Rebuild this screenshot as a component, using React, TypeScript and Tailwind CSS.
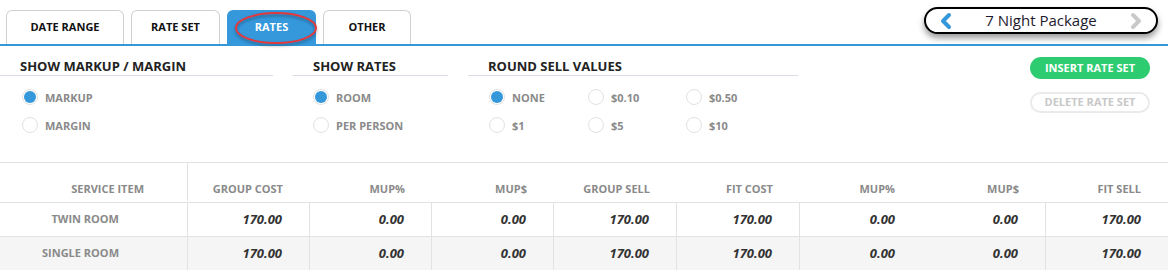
import React from "react";

const font = { fontFamily: '"Open Sans", "Noto Sans", sans-serif' };

function Radio({ checked, label }: { checked?: boolean; label: string }) {
  return (
    <div className="flex items-center h-4">
      <span className="w-4 h-4 rounded-full border border-[#e2e2e2] bg-white flex items-center justify-center shrink-0">
        {checked && <span className="w-[12px] h-[12px] rounded-full bg-[#3498db]" />}
      </span>
      <span className="ml-[7px] text-[11px] font-bold text-[#8a8a8a] leading-none">{label}</span>
    </div>
  );
}

function Tab({ label, active, w }: { label: string; active?: boolean; w: string }) {
  return (
    <div
      className={
        "h-[34px] flex items-center justify-center rounded-t-[6px] text-[11px] font-bold " +
        w +
        (active
          ? " bg-[#3498db] text-white"
          : " bg-white text-[#111] border border-b-0 border-[#d0d0d0]")
      }
    >
      {label}
    </div>
  );
}

const cols = "grid grid-cols-[188px_122px_122px_122px_123px_123px_122px_124px_122px]";

const headers = ["GROUP COST", "MUP%", "MUP$", "GROUP SELL", "FIT COST", "MUP%", "MUP$", "FIT SELL"];

function Row({ name, bg }: { name: string; bg: string }) {
  const vals = ["170.00", "0.00", "0.00", "170.00", "170.00", "0.00", "0.00", "170.00"];
  return (
    <div className={cols + " h-[34px] border-b border-[#e2e2e2] " + bg}>
      <div className="border-r border-[#e2e2e2] flex items-center justify-end pr-[68px] text-[11px] font-bold text-[#8a8a8a]">
        {name}
      </div>
      {vals.map((v, i) => (
        <div
          key={i}
          className={
            "flex items-center justify-end pr-[27px] text-[13px] font-bold italic text-[#333] " +
            (i < 7 && i !== 5 ? "border-r border-[#e2e2e2]" : "")
          }
        >
          {v}
        </div>
      ))}
    </div>
  );
}

export default function App() {
  return (
    <div className="w-[1168px] h-[270px] bg-white overflow-hidden relative" style={font}>
      {/* top bar */}
      <div className="flex justify-between items-start border-b-2 border-[#3498db] h-[46px] pl-[6px] pr-[10px]">
        <div className="flex gap-[7px] pt-[10px]">
          <Tab label="DATE RANGE" w="w-[118px]" />
          <Tab label="RATE SET" w="w-[89px]" />
          <Tab label="RATES" w="w-[89px]" active />
          <Tab label="OTHER" w="w-[88px]" />
        </div>
        <div className="mt-[7px] w-[234px] h-[27px] rounded-full border-[2.5px] border-black bg-white shadow-[0_4px_6px_rgba(0,0,0,0.4)] flex items-center justify-between px-[12px]">
          <svg width="16" height="18" viewBox="0 0 16 18">
            <polyline points="11,3 5,9 11,15" fill="none" stroke="#3498db" strokeWidth="4" strokeLinecap="round" strokeLinejoin="round" />
          </svg>
          <span className="text-[15px] text-[#1e1a2e] leading-none">7 Night Package</span>
          <svg width="16" height="18" viewBox="0 0 16 18">
            <polyline points="5,3 11,9 5,15" fill="none" stroke="#c9c9c9" strokeWidth="4" strokeLinecap="round" strokeLinejoin="round" />
          </svg>
        </div>
      </div>

      {/* annotation ellipse */}
      <svg className="absolute left-[232px] top-[9px]" width="90" height="42" viewBox="0 0 90 42">
        <defs>
          <filter id="sh" x="-20%" y="-20%" width="140%" height="160%">
            <feDropShadow dx="0" dy="2" stdDeviation="1.5" floodColor="#000" floodOpacity="0.35" />
          </filter>
        </defs>
        <ellipse cx="44" cy="19" rx="40" ry="15" fill="none" stroke="#e0393e" strokeWidth="2" filter="url(#sh)" />
      </svg>

      {/* options */}
      <div className="flex h-[116px] pt-[12px]">
        <div className="w-[273px]">
          <div className="h-[17px] border-b border-[#dcdce6] box-content pl-5 text-[13px] font-bold text-[#222] leading-[17px]">
            SHOW MARKUP / MARGIN
          </div>
          <div className="pl-[22px] pt-[13px] flex flex-col gap-[12px]">
            <Radio checked label="MARKUP" />
            <Radio label="MARGIN" />
          </div>
        </div>
        <div className="w-[155px] ml-5">
          <div className="h-[17px] border-b border-[#dcdce6] box-content pl-5 text-[13px] font-bold text-[#222] leading-[17px]">
            SHOW RATES
          </div>
          <div className="pl-[20px] pt-[13px] flex flex-col gap-[12px]">
            <Radio checked label="ROOM" />
            <Radio label="PER PERSON" />
          </div>
        </div>
        <div className="w-[330px] ml-5">
          <div className="h-[17px] border-b border-[#dcdce6] box-content pl-5 text-[13px] font-bold text-[#222] leading-[17px]">
            ROUND SELL VALUES
          </div>
          <div className="pl-[21px] pt-[13px] grid grid-cols-[99px_98px_auto] gap-y-[12px]">
            <Radio checked label="NONE" />
            <Radio label="$0.10" />
            <Radio label="$0.50" />
            <Radio label="$1" />
            <Radio label="$5" />
            <Radio label="$10" />
          </div>
        </div>
        <div className="ml-auto mr-[18px] flex flex-col gap-[13px] -mt-[1px]">
          <div className="w-[120px] h-[22px] rounded-full bg-[#2ecc71] text-white text-[11px] font-bold flex items-center justify-center">
            INSERT RATE SET
          </div>
          <div className="w-[120px] h-[21px] rounded-full border-2 border-[#ebebeb] text-[#c8c8c8] text-[11px] font-bold flex items-center justify-center">
            DELETE RATE SET
          </div>
        </div>
      </div>

      {/* table */}
      <div className="border-t border-[#e2e2e2]">
        <div className={cols + " h-[40px] border-b border-[#e2e2e2]"}>
          <div className="border-r border-[#e2e2e2] flex items-end justify-end pr-[43px] pb-[4px] text-[11px] font-bold text-[#8a8a8a] mb-[1px]">
            SERVICE ITEM
          </div>
          {headers.map((h, i) => (
            <div key={i} className="flex items-end justify-end pr-[27px] pb-[5px] text-[11px] font-bold text-[#8a8a8a]">
              {h}
            </div>
          ))}
        </div>
        <Row name="TWIN ROOM" bg="bg-white" />
        <Row name="SINGLE ROOM" bg="bg-[#f5f5f5]" />
      </div>
    </div>
  );
}
